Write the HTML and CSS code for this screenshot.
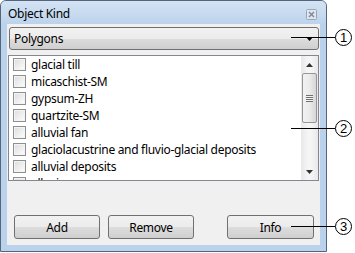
FILE: index.html
```html
<!DOCTYPE html>
<html>
<head>
  <title>Object Kind</title>
  <meta name="viewport" content="width=device-width, initial-scale=1">
  <link rel="stylesheet" href="styles.css">
</head>
<body>
  <div class="stage">
    <div class="window">
      <div class="titlebar">
        <span class="title">Object Kind</span>
        <svg class="close" width="11" height="11" viewBox="0 0 11 11">
          <rect x="0.5" y="0.5" width="10" height="10" rx="1" fill="#dfe6ef" stroke="#9aa6b6"/>
          <path d="M3 3 L8 8 M8 3 L3 8" stroke="#7d8796" stroke-width="1.4"/>
        </svg>
      </div>
      <div class="client">
        <div class="combo">
          <span>Polygons</span>
          <svg class="arrow" width="7" height="4" viewBox="0 0 7 4"><path d="M0 0 H7 L3.5 4 Z" fill="#000"/></svg>
        </div>
        <div class="listbox">
          <ul class="items">
            <li><span class="check"></span>glacial till</li>
            <li><span class="check"></span>micaschist-SM</li>
            <li><span class="check"></span>gypsum-ZH</li>
            <li><span class="check"></span>quartzite-SM</li>
            <li><span class="check"></span>alluvial fan</li>
            <li><span class="check"></span>glaciolacustrine and fluvio-glacial deposits</li>
            <li><span class="check"></span>alluvial deposits</li>
            <li><span class="check"></span>alluvium</li>
          </ul>
          <div class="scrollbar">
            <div class="sb-btn">
              <svg width="7" height="4" viewBox="0 0 7 4"><path d="M0 4 H7 L3.5 0 Z" fill="#333"/></svg>
            </div>
            <div class="thumb">
              <span class="grip"></span>
            </div>
            <div class="track"></div>
            <div class="sb-btn">
              <svg width="7" height="4" viewBox="0 0 7 4"><path d="M0 0 H7 L3.5 4 Z" fill="#333"/></svg>
            </div>
          </div>
        </div>
        <div class="buttons">
          <button class="button">Add</button>
          <button class="button">Remove</button>
          <span class="spacer"></span>
          <button class="button info">Info</button>
        </div>
      </div>
    </div>

    <div class="callout c1"><span class="line"></span><span class="num">1</span></div>
    <div class="callout c2"><span class="line"></span><span class="num">2</span></div>
    <div class="callout c3"><span class="line"></span><span class="num">3</span></div>
  </div>
</body>
</html>
```

FILE: styles.css
```css
body {
  margin: 0;
  background: #fff;
  font-family: "Noto Sans", "Open Sans", sans-serif;
  font-size: 12px;
  letter-spacing: -0.3px;
  color: #000;
}

.stage {
  position: relative;
  width: 355px;
  height: 253px;
}

.window {
  width: 325px;
  height: 250px;
  border: 1px solid #56667a;
  border-radius: 6px 6px 0 0;
  background: #bad2eb;
  display: flex;
  flex-direction: column;
}

.titlebar {
  height: 23px;
  display: flex;
  align-items: center;
  padding: 0 9px 0 7px;
  background: linear-gradient(#d4e3f4, #bcd3ec);
  border-radius: 5px 5px 0 0;
}

.title {
  flex: 1;
  padding-top: 2px;
}

.close {
  margin-top: 3px;
}

.client {
  flex: 1;
  margin: 0 6px 6px 6px;
  background: #f0f0f0;
  display: flex;
  flex-direction: column;
  padding: 3px 1px 0 1px;
}

.combo {
  height: 21px;
  margin-left: 1px;
  border: 1px solid #707070;
  border-radius: 3px;
  background: linear-gradient(#f2f2f2 0%, #ebebeb 50%, #dddddd 51%, #cfcfcf 100%);
  display: flex;
  align-items: center;
  padding: 0 5px 0 4px;
}

.combo span {
  flex: 1;
}

.listbox {
  margin-top: 5px;
  height: 124px;
  border: 1px solid #828790;
  background: #fff;
  display: flex;
  overflow: hidden;
}

.items {
  flex: 1;
  list-style: none;
  margin: 0;
  padding: 0 0 0 4px;
}

.items li {
  height: 17px;
  display: flex;
  align-items: center;
  white-space: nowrap;
}

.check {
  width: 11px;
  height: 11px;
  border: 1px solid #8e8f8f;
  background: linear-gradient(135deg, #dcdcdc, #f4f4f4 70%, #fff);
  box-shadow: inset 0 0 0 1px #f4f4f4;
  margin-right: 5px;
}

.scrollbar {
  width: 17px;
  display: flex;
  flex-direction: column;
  background: linear-gradient(90deg, #e8e8e8, #f5f5f5 40%, #f5f5f5 60%, #e8e8e8);
}

.sb-btn {
  height: 17px;
  display: flex;
  align-items: center;
  justify-content: center;
}

.thumb {
  height: 48px;
  margin: 0 1px;
  border: 1px solid #979797;
  border-radius: 2px;
  background: linear-gradient(90deg, #f2f2f2, #ebebeb 50%, #d6d6d6);
  display: flex;
  align-items: center;
  justify-content: center;
}

.grip {
  width: 7px;
  height: 7px;
  background: repeating-linear-gradient(#6f6f6f 0 1px, #f4f4f4 1px 2px);
}

.track {
  flex: 1;
}

.buttons {
  margin-top: 34px;
  display: flex;
  gap: 8px;
  padding: 0 5px 0 6px;
}

.button {
  width: 86px;
  height: 24px;
  border: 1px solid #707070;
  border-radius: 3px;
  background: linear-gradient(#f2f2f2 0%, #ebebeb 50%, #dddddd 51%, #cfcfcf 100%);
  font-family: "Noto Sans", "Open Sans", sans-serif;
  font-size: 12px;
  letter-spacing: -0.3px;
  color: #000;
  padding: 0;
}

.info {
  width: 87px;
}

.spacer {
  flex: 1;
}

.callout {
  position: absolute;
  left: 291px;
  display: flex;
  align-items: center;
}

.c1 { top: 29px; }
.c2 { top: 120px; }
.c3 { top: 218px; }

.line {
  width: 44px;
  height: 1px;
  background: #000;
}

.num {
  width: 15px;
  height: 15px;
  border: 1px solid #000;
  border-radius: 50%;
  background: #fff;
  font-family: "Liberation Sans", Arial, sans-serif;
  font-size: 13px;
  letter-spacing: 0;
  line-height: 15px;
  text-align: center;
}
```
